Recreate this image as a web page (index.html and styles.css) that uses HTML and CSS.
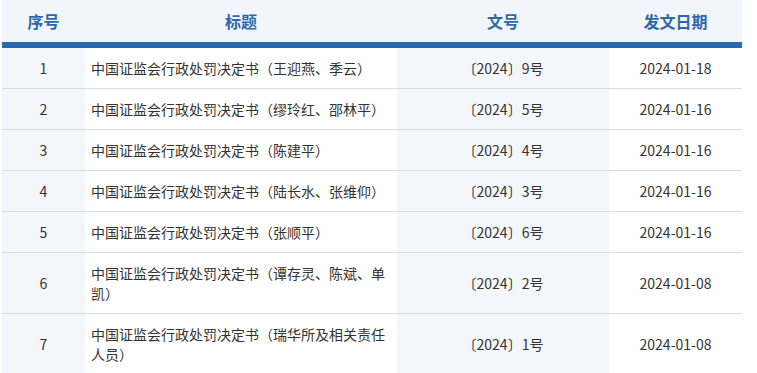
FILE: index.html
```html
<!DOCTYPE html>
<html lang="zh-CN">
<head>
<meta charset="utf-8">
<link rel="stylesheet" href="styles.css">
</head>
<body>
<div class="wrap">
<table class="list">
  <colgroup>
    <col class="c-no"><col class="c-title"><col class="c-doc"><col class="c-date">
  </colgroup>
  <thead>
    <tr><th>序号</th><th>标题</th><th>文号</th><th>发文日期</th></tr>
  </thead>
  <tbody>
    <tr><td class="no">1</td><td class="title">中国证监会行政处罚决定书（王迎燕、季云）</td><td class="doc">〔2024〕9号</td><td class="date">2024-01-18</td></tr>
    <tr><td class="no">2</td><td class="title">中国证监会行政处罚决定书（缪玲红、邵林平）</td><td class="doc">〔2024〕5号</td><td class="date">2024-01-16</td></tr>
    <tr><td class="no">3</td><td class="title">中国证监会行政处罚决定书（陈建平）</td><td class="doc">〔2024〕4号</td><td class="date">2024-01-16</td></tr>
    <tr><td class="no">4</td><td class="title">中国证监会行政处罚决定书（陆长水、张维仰）</td><td class="doc">〔2024〕3号</td><td class="date">2024-01-16</td></tr>
    <tr><td class="no">5</td><td class="title">中国证监会行政处罚决定书（张顺平）</td><td class="doc">〔2024〕6号</td><td class="date">2024-01-16</td></tr>
    <tr><td class="no">6</td><td class="title">中国证监会行政处罚决定书（谭存灵、陈斌、单凯）</td><td class="doc">〔2024〕2号</td><td class="date">2024-01-08</td></tr>
    <tr><td class="no">7</td><td class="title">中国证监会行政处罚决定书（瑞华所及相关责任人员）</td><td class="doc">〔2024〕1号</td><td class="date">2024-01-08</td></tr>
  </tbody>
</table>
</div>
</body>
</html>
```
FILE: styles.css
```css
html, body {
  margin: 0;
  padding: 0;
  background: #ffffff;
}
.wrap {
  padding-left: 2px;
}
.list {
  width: 740px;
  border-collapse: collapse;
  table-layout: fixed;
  font-family: "Noto Sans CJK SC", "Noto Sans", sans-serif;
  font-size: 14px;
  line-height: 20px;
  color: #333333;
}
.c-no { width: 83px; }
.c-title { width: 312px; }
.c-doc { width: 212px; }
.c-date { width: 133px; }
.list thead th {
  height: 42px;
  padding: 0;
  background: #f2f5f9;
  color: #2d68ad;
  font-size: 16px;
  font-weight: bold;
  text-align: center;
  vertical-align: middle;
  border-bottom: 6px solid #256bb0;
}
.list tbody td {
  padding: 10px 6px;
  border-bottom: 1px solid #dcdcdc;
  text-align: center;
  vertical-align: middle;
}
.list tbody td.no,
.list tbody td.doc {
  background: #f3f6fa;
}
.list tbody td.title {
  text-align: left;
}
```
